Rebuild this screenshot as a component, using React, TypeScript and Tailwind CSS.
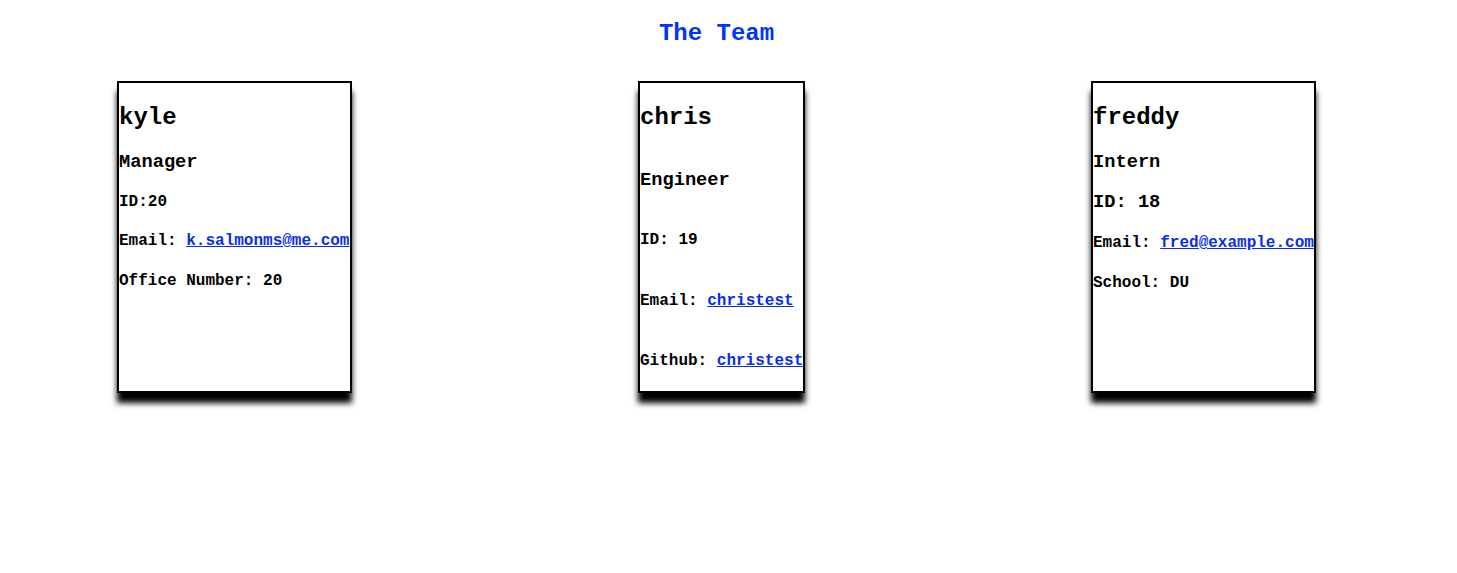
const mono = { fontFamily: '"Liberation Mono", "Courier New", monospace' };

type Row = { text: string; link?: string; size: "name" | "role" | "info" | "infoBig"; mt: number };

type Member = { width: number; rows: Row[] };

const team: Member[] = [
  {
    width: 235,
    rows: [
      { text: "kyle", size: "name", mt: 23 },
      { text: "Manager", size: "role", mt: 22 },
      { text: "ID:20", size: "info", mt: 21 },
      { text: "Email: ", link: "k.salmonms@me.com", size: "info", mt: 21 },
      { text: "Office Number: 20", size: "info", mt: 22 },
    ],
  },
  {
    width: 167,
    rows: [
      { text: "chris", size: "name", mt: 23 },
      { text: "Engineer", size: "role", mt: 40 },
      { text: "ID: 19", size: "info", mt: 41 },
      { text: "Email: ", link: "christest", size: "info", mt: 43 },
      { text: "Github: ", link: "christest", size: "info", mt: 42 },
    ],
  },
  {
    width: 225,
    rows: [
      { text: "freddy", size: "name", mt: 23 },
      { text: "Intern", size: "role", mt: 22 },
      { text: "ID: 18", size: "infoBig", mt: 20 },
      { text: "Email: ", link: "fred@example.com", size: "info", mt: 22 },
      { text: "School: DU", size: "info", mt: 22 },
    ],
  },
];

const sizeClass = {
  name: "h-[24px] text-[24px] leading-[24px]",
  role: "h-[20px] text-[18.72px] leading-[20px]",
  infoBig: "h-[20px] text-[18.72px] leading-[20px]",
  info: "h-[18px] text-[16px] leading-[18px]",
};

function Card({ member }: { member: Member }) {
  return (
    <div
      className="flex h-[312px] shrink-0 flex-col overflow-hidden border-2 border-black bg-white shadow-[0_10px_6px_#000]"
      style={{ width: member.width }}
    >
      {member.rows.map((row, i) => (
        <div
          key={i}
          className={`whitespace-nowrap font-bold text-black ${sizeClass[row.size]}`}
          style={{ marginTop: row.mt }}
        >
          {row.text}
          {row.link && (
            <a href="#" className="text-[#0a2ee8] underline">
              {row.link}
            </a>
          )}
        </div>
      ))}
    </div>
  );
}

export default function App() {
  return (
    <div className="min-h-[573px] w-full bg-white" style={mono}>
      <h1 className="pr-[24px] pt-[22px] text-center text-[24px] font-bold leading-[24px] text-[#0033ff]">
        The Team
      </h1>
      <div className="mt-[35px] flex gap-[286px] pl-[117px]">
        {team.map((m, i) => (
          <Card key={i} member={m} />
        ))}
      </div>
    </div>
  );
}
